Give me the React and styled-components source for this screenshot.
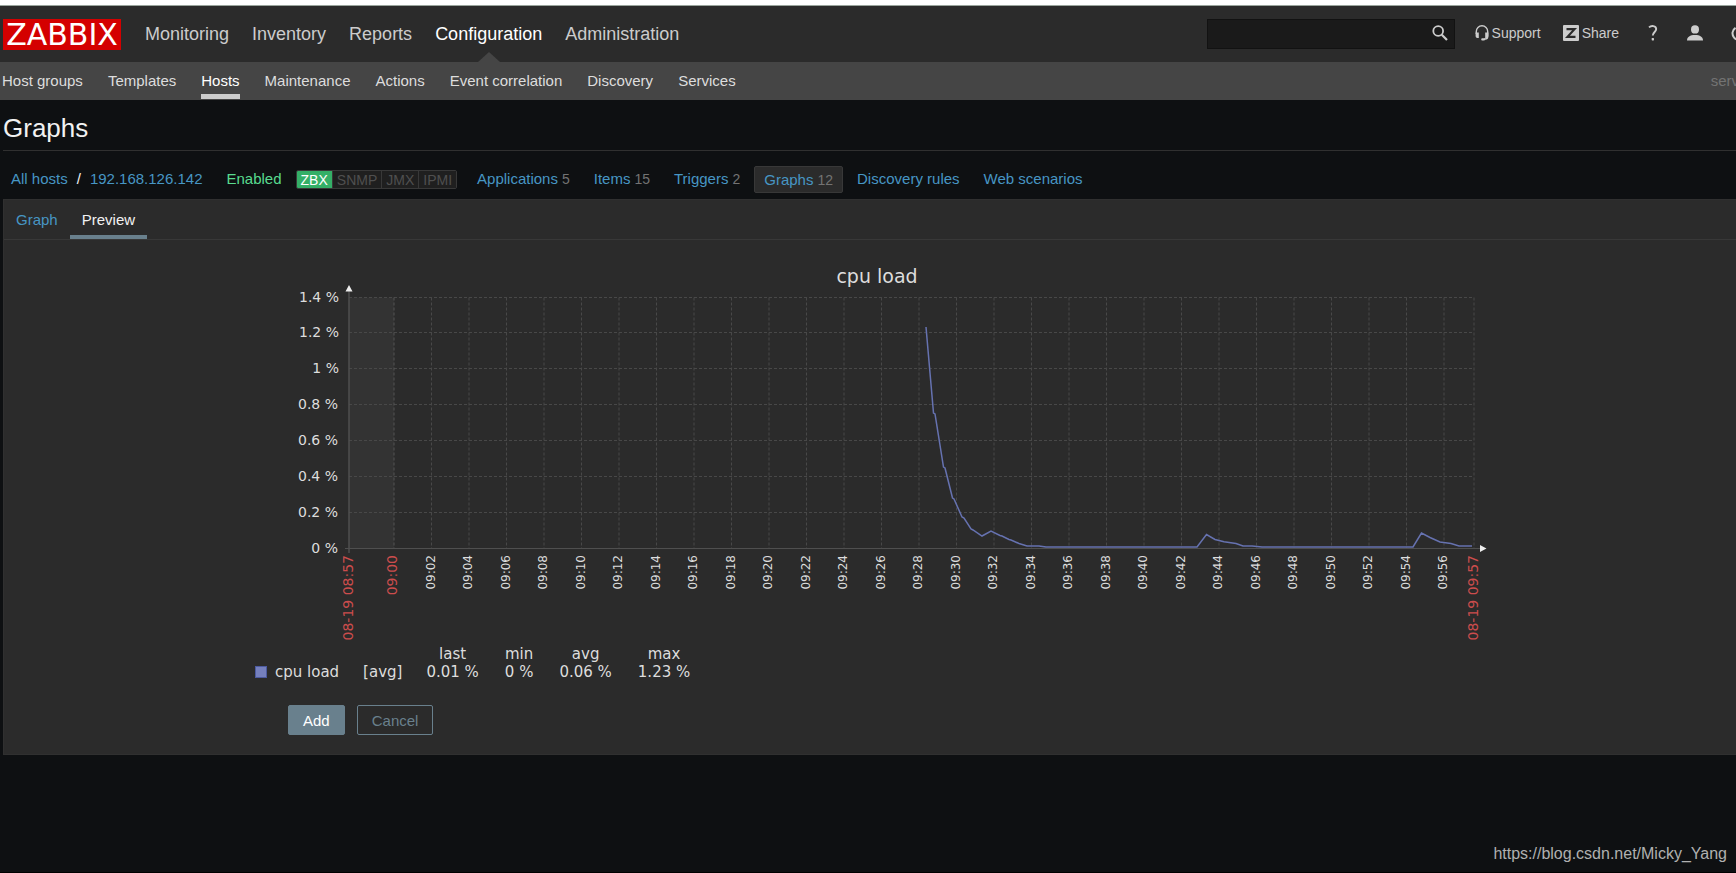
import React, { useState } from 'react';
import styled, { createGlobalStyle, css } from 'styled-components';

const GlobalStyle = createGlobalStyle`
  * {
    box-sizing: border-box;
  }
  body {
    margin: 0;
    background-color: #0e1012;
    color: #f2f2f2;
    font-family: Arial, 'Liberation Sans', sans-serif;
    font-size: 15px;
    line-height: 18px;
  }
  a {
    color: #4796c4;
    text-decoration: none;
  }
  button,
  input {
    font-family: inherit;
    font-size: 15px;
  }
`;

const Page = styled.div`
  display: flex;
  flex-direction: column;
  min-height: 100vh;
  border-top: 5px solid white;
  border-bottom: 1px solid black;
  overflow: hidden;
`;

const Header = styled.header`
  display: flex;
  align-items: center;
  height: 57px;
  padding-left: 3px;
  background-color: #2b2b2b;
  border-top: 1px solid #9aa59d;
`;

const Logo = styled.a`
  width: 118px;
  height: 31px;
  background-color: #d40000;
  color: white;
  font-family: 'DejaVu Sans', sans-serif;
  font-size: 30px;
  line-height: 31px;
  text-align: center;
`;

const MainNav = styled.nav`
  display: flex;
  align-self: stretch;
  gap: 23px;
  padding-left: 24px;
`;

const MainLink = styled.a`
  position: relative;
  display: flex;
  align-items: center;
  color: ${({ $active }) => ($active ? 'white' : '#cccccc')};
  font-size: 18px;
  ${({ $active }) =>
    $active &&
    css`
      &::after {
        content: '';
        position: absolute;
        bottom: 0;
        left: 50%;
        margin-left: -11px;
        border: 11px solid transparent;
        border-top-width: 0;
        border-bottom: 10px solid #454545;
      }
    `}
`;

const Tools = styled.div`
  display: flex;
  align-items: center;
  margin-left: auto;
  margin-right: -11px;
`;

const SearchForm = styled.form`
  display: flex;
  align-items: center;
  width: 248px;
  height: 30px;
  margin-right: 20px;
  background-color: #1a1a1a;
  border: 1px solid #121212;
  input {
    flex: 1;
    min-width: 0;
    padding: 0 6px;
    border: 0;
    outline: 0;
    background: none;
    color: #f2f2f2;
  }
`;

const IconButton = styled.button`
  display: flex;
  padding: 0 6px 2px;
  border: 0;
  background: none;
  color: #cccccc;
  cursor: pointer;
`;

const ToolLink = styled.a`
  display: flex;
  align-items: center;
  gap: 3px;
  margin-right: 22px;
  padding-bottom: 2px;
  color: #cccccc;
  font-size: 14px;
`;

const UserLink = styled.a`
  display: flex;
  margin-left: 28px;
  color: #cccccc;
  &:first-of-type {
    margin-left: 0;
  }
`;

const UserMenu = styled.div`
  display: flex;
  padding: 0 0 2px 6px;
`;

const SubNav = styled.nav`
  display: flex;
  gap: 25px;
  height: 38px;
  padding-left: 2px;
  background-color: #454545;
`;

const SubLink = styled.a`
  padding: 10px 0 4px;
  margin-bottom: 1px;
  color: ${({ $active }) => ($active ? 'white' : '#dddddd')};
  border-bottom: 5px solid ${({ $active }) => ($active ? '#cccccc' : 'transparent')};
`;

const ServerName = styled.span`
  margin-left: auto;
  margin-right: -3px;
  padding-top: 10px;
  color: #737373;
`;

const Main = styled.main`
  padding-left: 3px;
`;

const Title = styled.h1`
  margin: 0;
  padding: 13px 0 7px;
  border-bottom: 1px solid #303030;
  font-size: 26px;
  line-height: 30px;
  font-weight: normal;
`;

const HostBar = styled.div`
  display: flex;
  align-items: center;
  gap: 24px;
  height: 48px;
  padding: 8px 8px 0;
  white-space: nowrap;
`;

const Crumbs = styled.div`
  display: flex;
  gap: 9px;
`;

const Enabled = styled.span`
  color: #59db8f;
`;

const Badges = styled.div`
  display: flex;
  height: 19px;
  margin: 0 -4px 0 -10px;
  border: 1px solid #383838;
  border-radius: 2px;
  font-size: 14px;
  overflow: hidden;
`;

const Badge = styled.span`
  padding: 0 4px;
  border-left: 1px solid #383838;
  background-color: ${({ $on }) => ($on ? '#34af67' : '#1f1f1f')};
  color: ${({ $on }) => ($on ? 'white' : '#4f4f4f')};
  &:first-child {
    border-left: 0;
  }
`;

const HostLink = styled.a`
  span {
    margin-left: 4px;
    color: #737373;
    font-size: 14px;
  }
  ${({ $active }) =>
    $active &&
    css`
      margin: 0 -10px;
      padding: 4px 9px 3px;
      border: 1px solid #383838;
      border-radius: 2px;
      background-color: #2b2b2b;
    `}
`;

const Panel = styled.section`
  padding-bottom: 19px;
  border: 1px solid #303030;
  border-right: 0;
  background-color: #2b2b2b;
`;

const Tabs = styled.div`
  display: flex;
  height: 40px;
  border-bottom: 1px solid #383838;
`;

const Tab = styled.button`
  padding: 0 12px;
  border: 0;
  border-top: 4px solid transparent;
  border-bottom: 4px solid ${({ $active }) => ($active ? '#69808d' : 'transparent')};
  background: none;
  color: ${({ $active }) => ($active ? '#f2f2f2' : '#4796c4')};
  cursor: pointer;
`;

const GraphBox = styled.div`
  max-width: 1234px;
  margin: 0 auto;
  padding-top: 20px;
`;

const Chart = styled.svg`
  display: block;
  width: 100%;
  font-family: 'DejaVu Sans', sans-serif;
  font-size: 14px;
  fill: #dddddd;
`;

const Legend = styled.table`
  margin-left: 2px;
  border-collapse: collapse;
  color: #dddddd;
  font-family: 'DejaVu Sans', sans-serif;
  font-size: 15px;
  line-height: 18px;
  th,
  td {
    padding: 0 26px 0 0;
    font-weight: normal;
    text-align: center;
    white-space: nowrap;
  }
  th:first-child,
  td:nth-child(2) {
    padding-right: 24px;
  }
`;

const Swatch = styled.span`
  display: inline-block;
  width: 12px;
  height: 12px;
  margin-right: 8px;
  border: 1px solid #4c5aa0;
  background-color: #7580be;
  vertical-align: -1px;
`;

const Buttons = styled.div`
  display: flex;
  gap: 12px;
  padding: 24px 0 0 35px;
`;

const Button = styled.button`
  height: 30px;
  padding: 0 14px;
  border: 1px solid #69808d;
  border-radius: 2px;
  background-color: ${({ $primary }) => ($primary ? '#69808d' : 'transparent')};
  color: ${({ $primary }) => ($primary ? 'white' : '#69808d')};
  cursor: pointer;
`;

const Credit = styled.footer`
  margin-top: auto;
  padding: 0 9px 9px;
  color: #b0b0b0;
  font-size: 16px;
  text-align: right;
`;

const SearchIcon = () => (
  <svg width='16' height='16' viewBox='0 0 16 16' fill='none' stroke='currentColor'>
    <circle cx='6.2' cy='6' r='4.9' strokeWidth='1.8' />
    <path d='M9.8 9.8L15 15' strokeWidth='2.2' />
  </svg>
);

const HeadsetIcon = () => (
  <svg width='14' height='16' viewBox='0 0 14 16' fill='currentColor'>
    <path
      d='M1.300 9V6.500a5.700 5.700 0 0 1 11.400 0V11.500a2.500 2.500 0 0 1-2.500 2.500H9'
      fill='none'
      stroke='currentColor'
      strokeWidth='1.400'
    />
    <path d='M.6 7.500h3.200v5.500H2.400A1.800 1.800 0 0 1 .6 11.200zM10.200 7.500h3.200V11a2 2 0 0 1-2 2h-1.200z' />
    <rect x='6.200' y='13.200' width='3.800' height='2.300' rx='1' />
  </svg>
);

const ShareIcon = () => (
  <svg width='16' height='16' viewBox='0 0 16 16'>
    <rect width='16' height='16' rx='1' fill='#cccccc' />
    <path d='M3.500 4.200h8L4.500 11.800h8' fill='none' stroke='#2b2b2b' strokeWidth='2.200' />
  </svg>
);

const HelpIcon = () => (
  <svg width='12' height='16' viewBox='0 0 12 16' fill='none' stroke='currentColor'>
    <path d='M2 2.400C4.200.4 9.200.5 9.200 4.100c0 2.900-3.400 3-3.400 6.500' strokeWidth='1.900' />
    <rect x='4.700' y='12.900' width='2.300' height='2.500' rx='.6' fill='currentColor' stroke='none' />
  </svg>
);

const UserIcon = () => (
  <svg width='16' height='16' viewBox='0 0 16 16' fill='currentColor'>
    <ellipse cx='8' cy='4.400' rx='4' ry='4.200' />
    <path d='M0 15.500c0-3.600 3-5.500 8-5.500s8 1.900 8 5.500z' />
  </svg>
);

const PowerIcon = () => (
  <svg width='16' height='16' viewBox='0 0 16 16' fill='none' stroke='currentColor' strokeWidth='2'>
    <path d='M4.500 2.800a6.500 6.500 0 1 0 7 0M8 0v7' />
  </svg>
);

const mainMenu = ['Monitoring', 'Inventory', 'Reports', 'Configuration', 'Administration'];

const subMenu = [
  'Host groups',
  'Templates',
  'Hosts',
  'Maintenance',
  'Actions',
  'Event correlation',
  'Discovery',
  'Services',
];

const hostLinks = [
  { name: 'Applications', count: 5 },
  { name: 'Items', count: 15 },
  { name: 'Triggers', count: 2 },
  { name: 'Graphs', count: 12 },
  { name: 'Discovery rules' },
  { name: 'Web scenarios' },
];

const stats = [
  ['last', '0.01 %'],
  ['min', '0 %'],
  ['avg', '0.06 %'],
  ['max', '1.23 %'],
];

// plot area inside the chart
const LEFT = 96;
const RIGHT = 1221;
const TOP = 37.5;
const BOTTOM = 288.5;
const HOUR = 141;
const STEP = 37.5;

const levels = ['1.4 %', '1.2 %', '1 %', '0.8 %', '0.6 %', '0.4 %', '0.2 %', '0 %'];
const levelY = (i) => Math.round(TOP + (i * (BOTTOM - TOP)) / 7) - 0.5;

const ticks = Array.from({ length: 28 }, (_, i) => ({
  x: HOUR + (i + 1) * STEP,
  label: `09:${String((i + 1) * 2).padStart(2, '0')}`,
}));

const load = [
  [673, 67], [680.5, 153], [682, 154], [690.5, 207], [692, 208], [699.5, 238],
  [701, 239], [709, 257], [711, 258], [718, 269], [720, 270], [729, 276],
  [738, 271], [747, 275.5], [749, 276], [756, 279.5], [758, 280], [766, 283.5],
  [774, 286], [786, 286], [793, 287], [944, 287], [953.5, 274.5], [962, 279.5],
  [971, 281.8], [983, 283.5], [990, 286], [999, 286], [1009, 287], [1160, 287],
  [1168.5, 273], [1177, 277.5], [1187, 282], [1198, 283.5], [1206, 286], [1219, 286],
];

const TimeLabel = ({ x, red, children }) => (
  <text
    transform={`translate(${x} 295) rotate(-90)`}
    textAnchor='end'
    fontSize={red ? 14 : 12}
    fill={red ? '#cc4d4d' : undefined}>
    {children}
  </text>
);

const LoadChart = () => (
  <Chart viewBox='0 0 1234 385' role='img' aria-label='cpu load'>
    <text x='624' y='22.500' textAnchor='middle' fontSize='19'>
      cpu load
    </text>
    <rect x={LEFT} y={TOP} width={HOUR - LEFT} height={BOTTOM - TOP} fill='#333333' />
    <g stroke='#484848' strokeDasharray='3 2'>
      {levels.slice(0, -1).map((label, i) => (
        <line key={label} x1={LEFT} x2={RIGHT} y1={levelY(i)} y2={levelY(i)} />
      ))}
      {ticks.map(({ x, label }) => (
        <line key={label} x1={x} x2={x} y1={TOP} y2={BOTTOM} />
      ))}
      <line x1={RIGHT} x2={RIGHT} y1={TOP} y2={BOTTOM} />
      <line x1={HOUR} x2={HOUR} y1={TOP} y2={BOTTOM} stroke='#555555' />
    </g>
    <g stroke='#4f4f4f'>
      <line x1={LEFT} x2={LEFT} y1='31' y2='293' strokeWidth='1.500' />
      <line x1='92' x2='1227' y1={BOTTOM} y2={BOTTOM} />
    </g>
    <path d='M96 25l3.500 6.500h-7zM1233.500 288.500l-6.500-3.500v7z' fill='#eeeeee' />
    {levels.map((label, i) => (
      <text key={label} x={i < 3 ? 86 : 85} y={levelY(i) + 4} textAnchor='end'>
        {label}
      </text>
    ))}
    <TimeLabel x={100} red>08-19 08:57</TimeLabel>
    <TimeLabel x={144} red>09:00</TimeLabel>
    {ticks.map(({ x, label }) => (
      <TimeLabel key={label} x={x + 3}>{label}</TimeLabel>
    ))}
    <TimeLabel x={1225} red>08-19 09:57</TimeLabel>
    <polyline points={load.join(' ')} fill='none' stroke='#6672b0' strokeWidth='1.500' />
  </Chart>
);

const App = () => {
  const [search, setSearch] = useState('');
  const [tab, setTab] = useState('Preview');

  return (
    <>
      <GlobalStyle />
      <Page>
        <Header>
          <Logo href='#'>ZABBIX</Logo>
          <MainNav>
            {mainMenu.map((item) => (
              <MainLink key={item} href='#' $active={item === 'Configuration'}>
                {item}
              </MainLink>
            ))}
          </MainNav>
          <Tools>
            <SearchForm onSubmit={(e) => e.preventDefault()}>
              <input
                type='text'
                aria-label='Search'
                value={search}
                onChange={(e) => setSearch(e.target.value)}
              />
              <IconButton type='submit' aria-label='Run search'>
                <SearchIcon />
              </IconButton>
            </SearchForm>
            <ToolLink href='#'>
              <HeadsetIcon />
              Support
            </ToolLink>
            <ToolLink href='#'>
              <ShareIcon />
              Share
            </ToolLink>
            <UserMenu>
              <UserLink href='#' aria-label='Help'>
                <HelpIcon />
              </UserLink>
              <UserLink href='#' aria-label='Profile'>
                <UserIcon />
              </UserLink>
              <UserLink href='#' aria-label='Sign out'>
                <PowerIcon />
              </UserLink>
            </UserMenu>
          </Tools>
        </Header>
        <SubNav>
          {subMenu.map((item) => (
            <SubLink key={item} href='#' $active={item === 'Hosts'}>
              {item}
            </SubLink>
          ))}
          <ServerName>serv</ServerName>
        </SubNav>

        <Main>
          <Title>Graphs</Title>
          <HostBar>
            <Crumbs>
              <a href='#'>All hosts</a>
              <span>/</span>
              <a href='#'>192.168.126.142</a>
            </Crumbs>
            <Enabled>Enabled</Enabled>
            <Badges>
              <Badge $on>ZBX</Badge>
              <Badge>SNMP</Badge>
              <Badge>JMX</Badge>
              <Badge>IPMI</Badge>
            </Badges>
            {hostLinks.map(({ name, count }) => (
              <HostLink key={name} href='#' $active={name === 'Graphs'}>
                {name}
                {count ? <span>{count}</span> : ''}
              </HostLink>
            ))}
          </HostBar>

          <Panel>
            <Tabs role='tablist'>
              {['Graph', 'Preview'].map((name) => (
                <Tab
                  key={name}
                  type='button'
                  role='tab'
                  aria-selected={tab === name}
                  $active={tab === name}
                  onClick={() => setTab(name)}>
                  {name}
                </Tab>
              ))}
            </Tabs>
            <GraphBox>
              <LoadChart />
              <Legend>
                <thead>
                  <tr>
                    <td />
                    <td />
                    {stats.map(([name]) => (
                      <th key={name} scope='col'>
                        {name}
                      </th>
                    ))}
                  </tr>
                </thead>
                <tbody>
                  <tr>
                    <th scope='row'>
                      <Swatch />
                      cpu load
                    </th>
                    <td>[avg]</td>
                    {stats.map(([name, value]) => (
                      <td key={name}>{value}</td>
                    ))}
                  </tr>
                </tbody>
              </Legend>
              <Buttons>
                <Button type='button' $primary>
                  Add
                </Button>
                <Button type='button'>Cancel</Button>
              </Buttons>
            </GraphBox>
          </Panel>
        </Main>
        <Credit>https://blog.csdn.net/Micky_Yang</Credit>
      </Page>
    </>
  );
};

export default App;
